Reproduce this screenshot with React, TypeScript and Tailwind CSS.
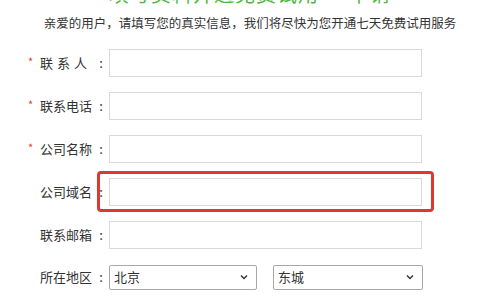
import React from 'react';

interface Field {
  label: React.ReactNode;
  required?: boolean;
  highlight?: boolean;
}

const fields: Field[] = [
  { label: <span className="flex w-full justify-between pr-[6px]"><span>联</span><span>系</span><span>人</span></span>, required: true },
  { label: '联系电话', required: true },
  { label: '公司名称', required: true },
  { label: '公司域名', highlight: true },
  { label: '联系邮箱' },
];

const Chevron = () => (
  <svg width="10" height="10" viewBox="0 0 10 10" className="shrink-0">
    <path d="M2 3.5 L5 6.5 L8 3.5" fill="none" stroke="#333" strokeWidth="1.4" />
  </svg>
);

const Label: React.FC<{ required?: boolean; children: React.ReactNode }> = ({ required, children }) => (
  <div className="flex items-center h-full">
    <span className="w-[16px] pl-[4px] text-[11px] text-[#e4393c] leading-none -mt-[4px]">
      {required ? '*' : ''}
    </span>
    <span className="w-[53px] flex text-[13px] text-[#333]">{children}</span>
    <span className="w-[16px] text-center text-[13px] text-[#333]">:</span>
  </div>
);

const SelectBox: React.FC<{ value: string; width: string }> = ({ value, width }) => (
  <div
    className={`${width} h-[25px] border border-[#a8a8a8] rounded-[2px] bg-white flex items-center justify-between pl-[4px] pr-[7px] text-[13px] text-[#333]`}
  >
    <span>{value}</span>
    <Chevron />
  </div>
);

export default function App() {
  return (
    <div
      className="w-[500px] h-[300px] overflow-hidden bg-white flex flex-col items-center"
      style={{ fontFamily: '"Noto Sans CJK SC", "Noto Sans", sans-serif' }}
    >
      <h1 className="-mt-[18px] text-[20px] leading-[24px] text-[#4cb83c] tracking-[1px] whitespace-nowrap">
        填写资料开通免费试用 — 申请
      </h1>
      <p className="mt-[7px] text-[12.5px] leading-[20px] text-[#333] whitespace-nowrap">
        亲爱的用户，请填写您的真实信息，我们将尽快为您开通七天免费试用服务
      </p>

      <div className="mt-[16px] w-full pl-[24px] flex flex-col gap-[15px]">
        {fields.map((f, i) => (
          <div key={i} className="flex items-center h-[28px]">
            <Label required={f.required}>{f.label}</Label>
            <div className="relative">
              <div className="w-[313px] h-[28px] border border-[#d9d9d9] bg-white" />
              {f.highlight && (
                <div className="absolute -top-[7px] -bottom-[6px] -left-[12px] -right-[12px] border-[3px] border-[#dc3a2e] rounded-[4px]" />
              )}
            </div>
          </div>
        ))}
        <div className="flex items-center h-[28px] -mt-[1px]">
          <Label>所在地区</Label>
          <div className="flex items-center gap-[16px]">
            <SelectBox value="北京" width="w-[148px]" />
            <SelectBox value="东城" width="w-[150px]" />
          </div>
        </div>
      </div>
    </div>
  );
}
